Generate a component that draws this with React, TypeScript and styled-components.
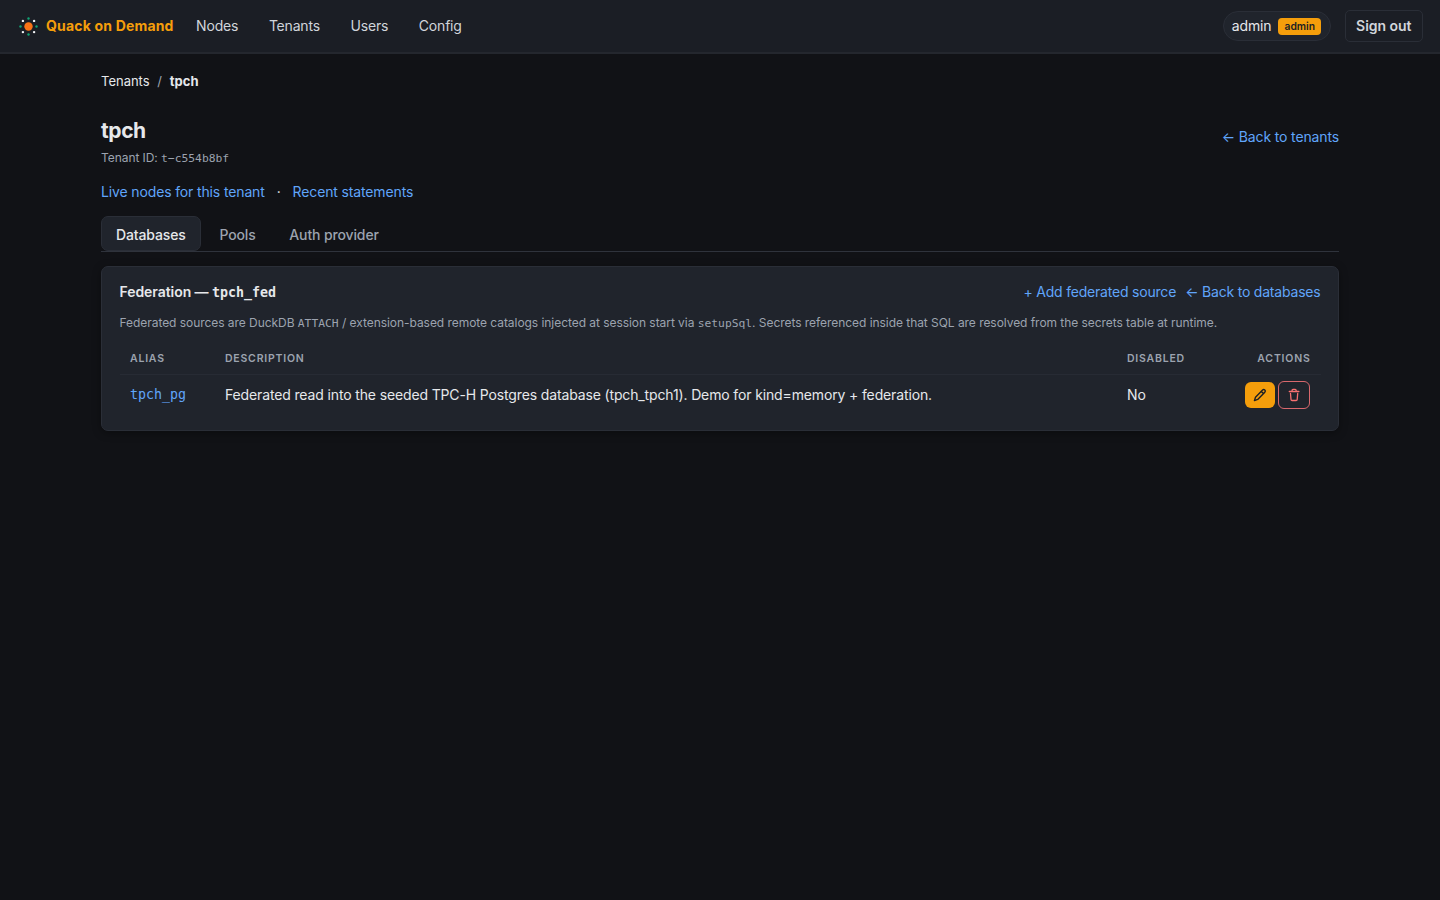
import React from "react";
import styled, { createGlobalStyle } from "styled-components";

const GlobalStyle = createGlobalStyle`
  *, *::before, *::after { box-sizing: border-box; }
  body {
    margin: 0;
    min-height: 100vh;
    background: #111216;
    color: #e6e8eb;
    font: 14px/20px Inter, "Liberation Sans", sans-serif;
    letter-spacing: -0.138px;
    overflow: hidden;
  }
  h1, h2, p { margin: 0; }
  a { color: inherit; text-decoration: none; }
`;

const TopBar = styled.header`
  display: flex;
  align-items: center;
  height: 54px;
  padding: 0 17px 0 19px;
  background: #1b1e25;
  border-bottom: 2px solid #24272e;
`;

const Brand = styled.a`
  display: flex;
  align-items: center;
  gap: 8px;
  color: #f59e0b;
  font-weight: 650;
  letter-spacing: 0.18px;
  white-space: nowrap;
`;

const Nav = styled.nav`
  display: flex;
  gap: 30.7px;
  margin-left: 22.5px;
  color: #d1d5db;
  letter-spacing: -0.2px;
`;

const Account = styled.div`
  display: flex;
  align-items: center;
  gap: 14px;
  margin-left: auto;
`;

const UserPill = styled.span`
  display: flex;
  align-items: center;
  gap: 7px;
  height: 30px;
  padding: 0 8.5px 0 8px;
  border: 1px solid #2a2e37;
  border-radius: 15px;
  background: #20242c;
`;

const RoleBadge = styled.span`
  padding: 0 6px;
  border-radius: 4px;
  background: #f59e0b;
  color: #1b1e25;
  font-size: 10.3px;
  font-weight: 600;
  letter-spacing: 0;
  line-height: 17px;
`;

const SignOut = styled.button`
  height: 32px;
  padding: 0 10.5px;
  border: 1px solid #2a2e37;
  border-radius: 5px;
  background: transparent;
  color: #d1d5db;
  font: 600 14px/20px Inter, sans-serif;
  letter-spacing: -0.03px;
`;

const Page = styled.main`
  width: 1238px;
  margin: 0 auto;
  padding-top: 17px;
`;

const Breadcrumb = styled.nav`
  display: flex;
  gap: 7.7px;
  font-size: 13px;
  letter-spacing: 0;
  span { color: #9ca3af; }
  strong { letter-spacing: 0.1px; }
`;

const TitleRow = styled.div`
  display: flex;
  justify-content: space-between;
  align-items: flex-start;
  margin-top: 26px;
`;

const Title = styled.h1`
  font-size: 21px;
  line-height: 28px;
  font-weight: 700;
  letter-spacing: -0.4px;
`;

const TenantId = styled.p`
  margin-top: 4px;
  color: #9ca3af;
  font-size: 12px;
  line-height: 18px;
  letter-spacing: -0.06px;
`;

const Mono = styled.code<{ $size: number }>`
  font-family: "DejaVu Sans Mono", monospace;
  font-size: ${(p) => p.$size}px;
  letter-spacing: 0;
`;

const Link = styled.a`
  color: #60a5fa;
  white-space: nowrap;
`;

const BackLink = styled(Link)`
  margin-top: 10px;
`;

const QuickLinks = styled.div`
  display: flex;
  gap: 12px;
  margin-top: 14px;
`;

const Tabs = styled.div`
  display: flex;
  height: 36px;
  margin-top: 14px;
  border-bottom: 1px solid #2f333c;
`;

const Tab = styled.button<{ $active?: boolean }>`
  height: 35px;
  padding: 3px 14px 0;
  margin-right: 3.7px;
  border: 1px solid ${(p) => (p.$active ? "#2a2e37" : "transparent")};
  border-radius: 7px;
  background: ${(p) => (p.$active ? "#20242c" : "transparent")};
  color: ${(p) => (p.$active ? "#e6e8eb" : "#9ca3af")};
  font: 500 14px/20px Inter, sans-serif;
  letter-spacing: -0.13px;
`;

const Card = styled.section`
  height: 164.5px;
  margin-top: 14px;
  padding: 15px 17.5px 0;
  border: 1px solid #2a2e37;
  border-radius: 7px;
  background: #20242c;
  box-shadow: 0 2px 8px rgba(0, 0, 0, 0.35);
`;

const CardHead = styled.div`
  display: flex;
  justify-content: space-between;
`;

const CardTitle = styled.h2`
  font-size: 14px;
  line-height: 20px;
  font-weight: 600;
  letter-spacing: -0.06px;
`;

const CardActions = styled.div`
  display: flex;
  gap: 9px;
  letter-spacing: -0.2px;
`;

const Note = styled.p`
  margin-top: 11px;
  color: #9ca3af;
  font-size: 12px;
  line-height: 18px;
  letter-spacing: -0.05px;
  white-space: nowrap;
`;

const Table = styled.table`
  width: 1201px;
  margin-top: 10px;
  border-collapse: collapse;
  table-layout: fixed;
`;

const HeadCell = styled.th<{ $width: number; $right?: boolean }>`
  width: ${(p) => p.$width}px;
  height: 31px;
  padding: 1px 10px 0 10.5px;
  border-bottom: 1px solid #272b34;
  color: #9ca3af;
  font-size: 10.5px;
  font-weight: 600;
  letter-spacing: 0.78px;
  text-align: ${(p) => (p.$right ? "right" : "left")};
`;

const Cell = styled.td`
  height: 41px;
  padding: 0 10.5px;
  white-space: nowrap;
`;

const RowActions = styled.div`
  display: flex;
  justify-content: flex-end;
  align-items: center;
  gap: 3px;
`;

const IconButton = styled.button<{ $danger?: boolean }>`
  display: flex;
  align-items: center;
  justify-content: center;
  width: ${(p) => (p.$danger ? 32 : 30)}px;
  height: ${(p) => (p.$danger ? 28 : 26)}px;
  padding: 0;
  border: ${(p) => (p.$danger ? "1px solid #d8686d" : "0")};
  border-radius: 6px;
  background: ${(p) => (p.$danger ? "transparent" : "#f59e0b")};
  color: ${(p) => (p.$danger ? "#f87171" : "#1b1e25")};
`;

const Logo = () => (
  <svg width="19" height="19" viewBox="0 0 19 19">
    <circle cx="9.5" cy="9.5" r="4.2" fill="#f97316" />
    <g fill="#10a374">
      <circle cx="9.5" cy="1.5" r="1.2" />
      <circle cx="17.5" cy="9.5" r="1.2" />
      <circle cx="9.5" cy="17.5" r="1.2" />
      <circle cx="1.5" cy="9.5" r="1.2" />
    </g>
    <g fill="#f3f4f6">
      <circle cx="3.9" cy="3.9" r="1.2" />
      <circle cx="15.1" cy="3.9" r="1.2" />
      <circle cx="3.9" cy="15.1" r="1.2" />
      <circle cx="15.1" cy="15.1" r="1.2" />
    </g>
  </svg>
);

const PencilIcon = () => (
  <svg width="14" height="14" viewBox="0 0 14 14" fill="none" stroke="currentColor" strokeWidth="1.4" strokeLinejoin="round">
    <path d="M1.4 12.6 2.5 9.2 9.6 2.1a1.5 1.5 0 0 1 2.2 2.2L4.7 11.4Z" />
    <path d="m8.3 3.4 2.2 2.2" />
  </svg>
);

const TrashIcon = () => (
  <svg width="14" height="14" viewBox="0 0 14 14" fill="none" stroke="currentColor" strokeWidth="1.3" strokeLinecap="round" strokeLinejoin="round">
    <path d="M2.3 3.5h9.6" />
    <path d="M5.1 3.3V2.3a.9.9 0 0 1 .9-.9h2.2a.9.9 0 0 1 .9.9v1" />
    <path d="m3.5 5.5.5 6a1.1 1.1 0 0 0 1.1 1h4a1.1 1.1 0 0 0 1.1-1l.5-6" />
  </svg>
);

export default function App() {
  return (
    <>
      <GlobalStyle />
      <TopBar>
        <Brand href="#"><Logo />Quack on Demand</Brand>
        <Nav>
          <a href="#">Nodes</a>
          <a href="#">Tenants</a>
          <a href="#">Users</a>
          <a href="#">Config</a>
        </Nav>
        <Account>
          <UserPill>admin<RoleBadge>admin</RoleBadge></UserPill>
          <SignOut>Sign out</SignOut>
        </Account>
      </TopBar>
      <Page>
        <Breadcrumb>
          <a href="#">Tenants</a>
          <span>/</span>
          <strong>tpch</strong>
        </Breadcrumb>
        <TitleRow>
          <div>
            <Title>tpch</Title>
            <TenantId>Tenant ID: <Mono $size={11.3}>t−c554b8bf</Mono></TenantId>
          </div>
          <BackLink href="#">← Back to tenants</BackLink>
        </TitleRow>
        <QuickLinks>
          <Link href="#">Live nodes for this tenant</Link>
          <span>·</span>
          <Link href="#">Recent statements</Link>
        </QuickLinks>
        <Tabs>
          <Tab $active>Databases</Tab>
          <Tab>Pools</Tab>
          <Tab>Auth provider</Tab>
        </Tabs>
        <Card>
          <CardHead>
            <CardTitle>Federation — <Mono $size={13.3}>tpch_fed</Mono></CardTitle>
            <CardActions>
              <Link href="#">+ Add federated source</Link>
              <Link href="#">← Back to databases</Link>
            </CardActions>
          </CardHead>
          <Note>
            Federated sources are DuckDB <Mono $size={11.3}>ATTACH</Mono> / extension-based remote catalogs injected at
            session start via <Mono $size={11.3}>setupSql</Mono>. Secrets referenced inside that SQL are resolved from the
            secrets table at runtime.
          </Note>
          <Table>
            <thead>
              <tr>
                <HeadCell $width={95}>ALIAS</HeadCell>
                <HeadCell $width={902}>DESCRIPTION</HeadCell>
                <HeadCell $width={97}>DISABLED</HeadCell>
                <HeadCell $width={107} $right>ACTIONS</HeadCell>
              </tr>
            </thead>
            <tbody>
              <tr>
                <Cell><Link href="#"><Mono $size={13.3}>tpch_pg</Mono></Link></Cell>
                <Cell>Federated read into the seeded TPC-H Postgres database (tpch_tpch1). Demo for kind=memory + federation.</Cell>
                <Cell>No</Cell>
                <Cell>
                  <RowActions>
                    <IconButton aria-label="Edit"><PencilIcon /></IconButton>
                    <IconButton $danger aria-label="Delete"><TrashIcon /></IconButton>
                  </RowActions>
                </Cell>
              </tr>
            </tbody>
          </Table>
        </Card>
      </Page>
    </>
  );
}
